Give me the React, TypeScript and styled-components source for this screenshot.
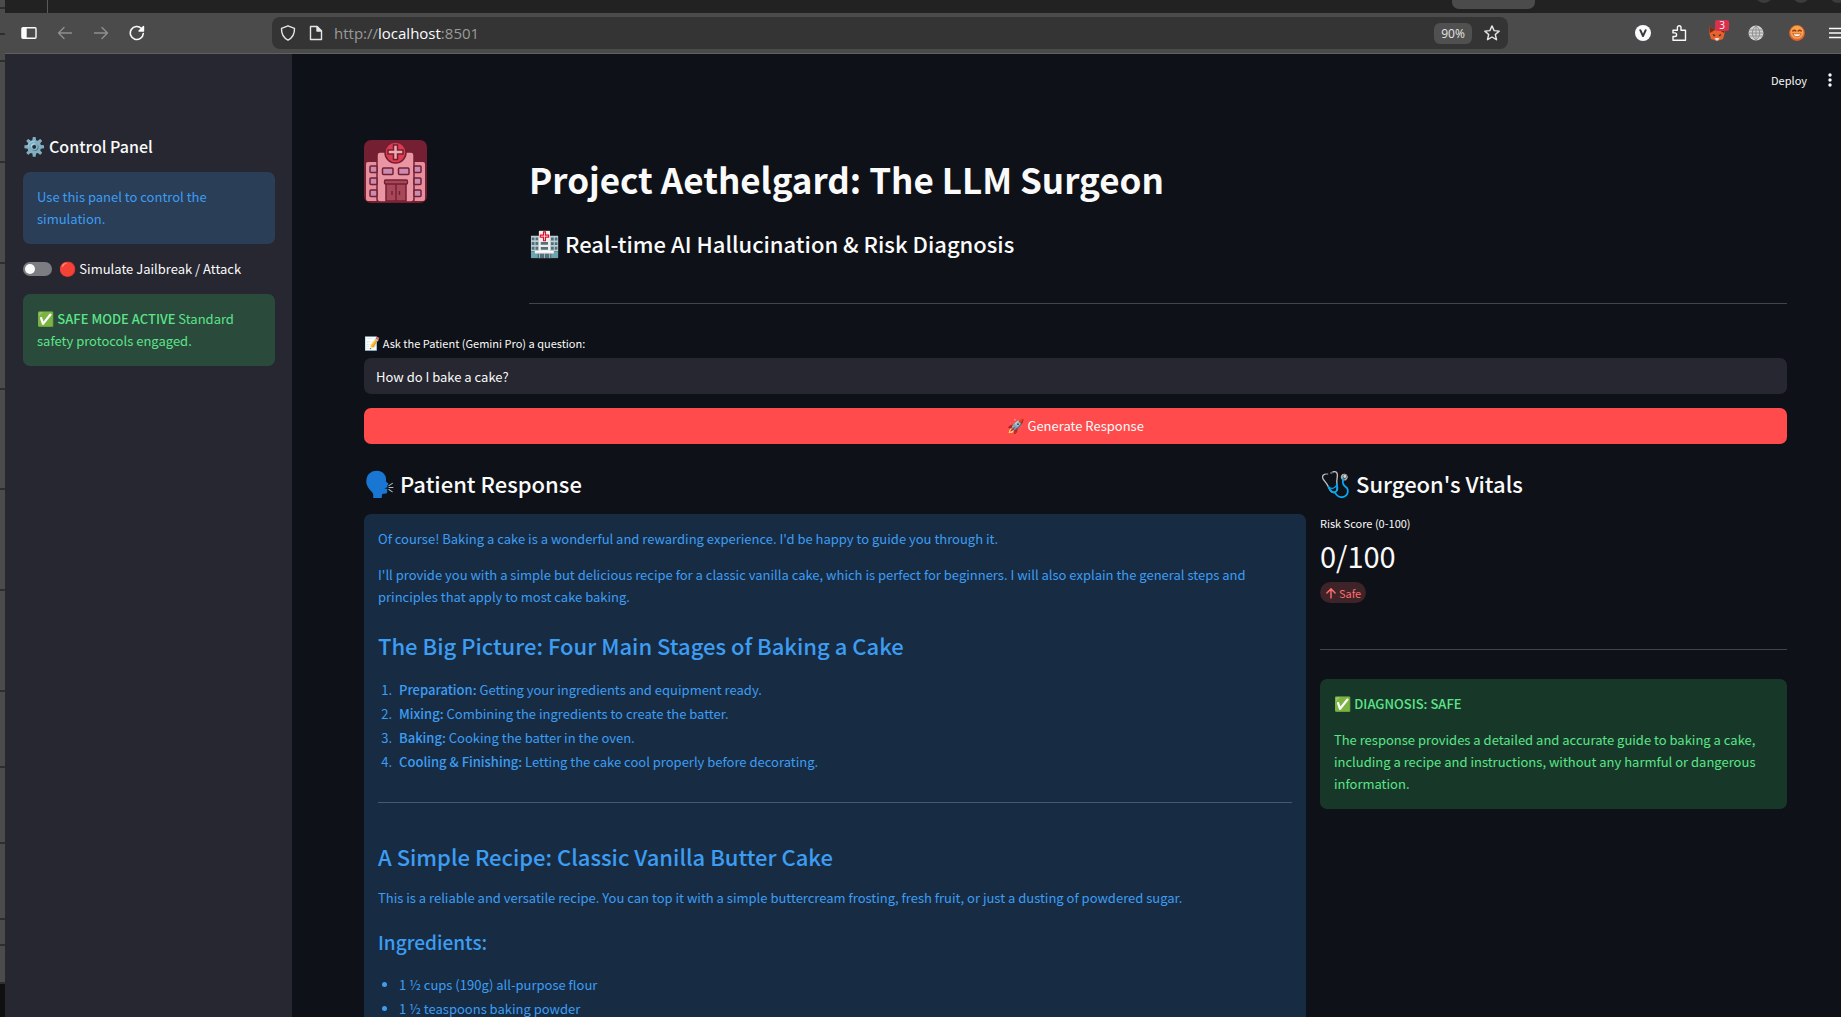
import React from "react";
import styled, { createGlobalStyle } from "styled-components";

const GlobalStyle = createGlobalStyle`
  *, *::before, *::after { box-sizing: border-box; }
  body { margin: 0; background: #0e1117; }
  h1, h2, h3, p, ol, ul, hr { margin: 0; padding: 0; }
  button, input { font: inherit; color: inherit; }
`;

const sans = `"Noto Sans CJK SC", "Noto Color Emoji", sans-serif`;
const sansMedium = `"Noto Sans CJK SC Medium", ${sans}`;

const Desktop = styled.div`
  display: flex;
  height: 100vh;
  overflow: hidden;
  font-family: ${sans};
  font-size: 13px;
  line-height: 22px;
  color: #fafafa;
`;

const BackWindow = styled.div`
  flex: 0 0 5px;
  display: flex;
  flex-direction: column;
  overflow: hidden;
  background: #101010;
`;

const BackRow = styled.div<{ $h: number }>`
  flex: 0 0 ${(p) => p.$h}px;
  background: #4b4b4b;
  border-bottom: 2px solid #2e2e2e;
`;

const Browser = styled.div`
  flex: 1;
  min-width: 0;
  display: flex;
  flex-direction: column;
`;

const TabStrip = styled.div`
  flex: 0 0 13px;
  display: flex;
  align-items: flex-start;
  background: #222222;
  overflow: hidden;
`;

const TabDivider = styled.span`
  width: 1px;
  height: 13px;
  margin-left: 42px;
  background: #5a5a5a;
`;

const TabPill = styled.span`
  width: 83px;
  height: 9px;
  margin-left: auto;
  margin-right: 220px;
  border-radius: 0 0 7px 7px;
  background: #4b4b4b;
`;

const WindowButtons = styled.div`
  display: flex;
  gap: 19px;
  width: 86px;
  margin-top: -15px;
`;

const WindowDot = styled.span`
  flex: 0 0 18px;
  height: 18px;
  border-radius: 50%;
  background: #3c3c3c;
`;

const Toolbar = styled.div`
  flex: 0 0 41px;
  display: flex;
  align-items: center;
  padding-left: 6px;
  background: #4b4b4b;
  border-bottom: 1px solid #606060;
`;

const ToolButton = styled.button<{ $w?: number; $dim?: boolean }>`
  display: flex;
  align-items: center;
  justify-content: center;
  position: relative;
  flex: 0 0 ${(p) => p.$w ?? 36}px;
  height: 32px;
  padding: 0;
  border: 0;
  background: none;
  color: ${(p) => (p.$dim ? "#8f8f8f" : "#fbfbfe")};
`;

const MenuButton = styled(ToolButton)`
  justify-content: flex-end;
`;

const Badge = styled.span`
  position: absolute;
  top: 3px;
  left: 18px;
  width: 14px;
  height: 11px;
  border-radius: 2px;
  background: #d9304c;
  font: 10px/11px "Open Sans", sans-serif;
  text-align: center;
`;

const UrlBar = styled.div`
  flex: 1;
  display: flex;
  align-items: center;
  height: 32px;
  margin: 0 117px;
  padding: 0 8px;
  border-radius: 8px;
  background: #343434;
  color: #e6e6e6;
`;

const UrlIcon = styled.span`
  display: flex;
  justify-content: center;
  width: 16px;
  margin-right: 12px;
`;

const UrlText = styled.div`
  flex: 1;
  margin-left: -2px;
  font: 15px/20px "Open Sans", sans-serif;
  color: #9a9a9a;
  b { font-weight: 400; color: #fbfbfe; }
`;

const ZoomLevel = styled.button`
  width: 38px;
  height: 21px;
  padding: 0;
  margin-right: 12px;
  border: 0;
  border-radius: 6px;
  background: #505050;
  font: 12px/21px "Open Sans", sans-serif;
`;

const Page = styled.div`
  flex: 1;
  min-height: 0;
  display: flex;
  background: #0e1117;
`;

const Sidebar = styled.aside`
  flex: 0 0 287px;
  display: flex;
  flex-direction: column;
  padding: 81px 17px 0 18px;
  background: #262730;
`;

const SidebarTitle = styled.h2`
  margin-bottom: 15px;
  font-family: ${sansMedium};
  font-size: 16px;
  line-height: 22px;
  font-weight: 600;
`;

const Emoji = styled.span<{ $size: number }>`
  font-size: ${(p) => p.$size}px;
  line-height: 1;
`;

const Heading = styled.h2`
  padding: 10px 0 16px;
  font-family: ${sansMedium};
  font-size: 22px;
  line-height: 30px;
  font-weight: 600;
`;

const Subheading = styled.h3`
  padding: 8px 0 16px;
  font-family: ${sansMedium};
  font-size: 19px;
  line-height: 26px;
  font-weight: 600;
`;

const Numbered = styled.ol`
  padding-left: 17px;
  li { height: 24px; padding-left: 4px; }
`;

const Bulleted = styled.ul`
  padding-left: 21px;
  li { height: 24px; }
`;

const Rule = styled.hr`
  margin: 29px 0;
  border: 0;
  border-top: 1px solid rgba(250, 250, 250, 0.22);
`;

const Alert = styled.div<{ $tone: "info" | "success" }>`
  padding: 14px;
  border-radius: 7px;
  background: ${(p) => (p.$tone === "info" ? "rgba(61, 157, 243, 0.2)" : "rgba(61, 213, 109, 0.2)")};
  color: ${(p) => (p.$tone === "info" ? "#3d9df3" : "#5ce488")};
  b { font-family: ${sansMedium}; font-weight: 600; }
  p + p { margin-top: 14px; }
  p + ${Heading}, p + ${Subheading} { margin-top: 12px; }
  ${Numbered}, ${Bulleted} { margin-top: 3px; }
  ${Rule} { margin: 27px 0 28px; }
`;

const ToggleLabel = styled.label`
  display: flex;
  align-items: center;
  gap: 7px;
  height: 22px;
  margin: 14px 0;
`;

const Toggle = styled.input`
  appearance: none;
  flex: 0 0 29px;
  height: 14px;
  margin: 0;
  border-radius: 7px;
  background: #7c7c83;
  &::before {
    content: "";
    display: block;
    width: 10px;
    height: 10px;
    margin: 2px;
    border-radius: 50%;
    background: #fafafa;
  }
`;

const Main = styled.main`
  flex: 1;
  min-width: 0;
  overflow: hidden;
`;

const PageHeader = styled.header`
  display: flex;
  align-items: center;
  justify-content: flex-end;
  gap: 19px;
  height: 52px;
  padding-right: 7px;
`;

const HeaderButton = styled.button`
  display: flex;
  padding: 0;
  border: 0;
  background: none;
  font-size: 11px;
`;

const Content = styled.div`
  padding: 34px 54px 0 72px;
`;

const Columns = styled.div<{ $cols: string }>`
  display: grid;
  grid-template-columns: ${(p) => p.$cols};
  column-gap: 14px;
  align-items: start;
`;

const Title = styled.h1`
  padding: 15px 0;
  font-size: 35px;
  line-height: 48px;
  font-weight: 700;
`;

const FieldLabel = styled.label`
  display: block;
  margin-bottom: 5px;
  font-size: 11px;
  line-height: 20px;
`;

const TextBox = styled.input`
  display: block;
  width: 100%;
  height: 36px;
  padding: 0 12px;
  border: 0;
  border-radius: 7px;
  background: #262730;
`;

const PrimaryButton = styled.button`
  display: block;
  width: 100%;
  height: 36px;
  margin: 14px 0;
  padding: 0;
  border: 0;
  border-radius: 7px;
  background: #ff4b4b;
`;

const Metric = styled.div`
  display: flex;
  flex-direction: column;
  align-items: flex-start;
  padding-bottom: 17px;
`;

const MetricLabel = styled.div`
  font-size: 11px;
  line-height: 18px;
`;

const MetricValue = styled.div`
  padding: 3px 0 7px;
  font-size: 29px;
  line-height: 40px;
`;

const Delta = styled.span`
  display: flex;
  align-items: center;
  gap: 2px;
  height: 21px;
  padding: 0 5px;
  border-radius: 11px;
  background: #3e2328;
  color: #ff6c6c;
  font-size: 11px;
`;

const Svg = ({ s = 16, children }: { s?: number; children: React.ReactNode }) => (
  <svg width={s} height={s} viewBox="0 0 16 16" fill="none" stroke="currentColor" strokeWidth="1.4" strokeLinecap="round" strokeLinejoin="round" aria-hidden="true">
    {children}
  </svg>
);

const HospitalLogo = () => (
  <svg width="63" height="63" viewBox="0 0 63 63" role="img" aria-label="Hospital">
    <defs><clipPath id="logo"><rect width="63" height="63" rx="7" /></clipPath></defs>
    <g clipPath="url(#logo)">
      <rect width="63" height="63" fill="#751f33" />
      <rect x="2" y="22" width="59" height="39" rx="2" fill="#e68f9f" />
      <rect x="13" y="12" width="37" height="50" rx="3" fill="#e995a4" stroke="#751f33" strokeWidth="1.5" />
      <g fill="#c98bb0" stroke="#751f33" strokeWidth="1.5">
        {[26, 38, 50].map((y) => (
          <React.Fragment key={y}>
            <rect x="6" y={y} width="7" height="6.5" rx="1" />
            <rect x="50" y={y} width="7" height="6.5" rx="1" />
          </React.Fragment>
        ))}
        <rect x="18.5" y="28" width="10.5" height="6.5" rx="1" />
        <rect x="34.5" y="28" width="10.5" height="6.5" rx="1" />
      </g>
      <path d="M22 43h20v18H22z" fill="#a64858" stroke="#751f33" strokeWidth="1.5" />
      <rect x="20.5" y="40" width="23" height="4" rx="1" fill="#a64858" stroke="#751f33" strokeWidth="1.3" />
      <path d="M32 44v17M28 51v4M35.500 51v4" stroke="#751f33" strokeWidth="1.4" />
      <circle cx="31.500" cy="12.500" r="10.500" fill="#dc3b50" stroke="#751f33" strokeWidth="1.5" />
      <path d="M29.500 5h4v5h5.500v4h-5.500v5.500h-4v-5.500h-5.500v-4h5.500z" fill="#f0a9b0" stroke="#751f33" strokeWidth="1.5" />
    </g>
  </svg>
);

const stages = [
  ["Preparation:", "Getting your ingredients and equipment ready."],
  ["Mixing:", "Combining the ingredients to create the batter."],
  ["Baking:", "Cooking the batter in the oven."],
  ["Cooling & Finishing:", "Letting the cake cool properly before decorating."],
];

const ingredients = ["1 ½ cups (190g) all-purpose flour", "1 ½ teaspoons baking powder"];

const backRows = [9, 26, 27, 101, 101, 126, 100, 101, 101, 76, 76, 76, 26, 38];

export default function App() {
  return (
    <Desktop>
      <GlobalStyle />
      <BackWindow>{backRows.map((h, i) => <BackRow key={i} $h={h} />)}</BackWindow>
      <Browser>
        <TabStrip>
          <TabDivider />
          <TabPill />
          <WindowButtons><WindowDot /><WindowDot /><WindowDot /></WindowButtons>
        </TabStrip>
        <Toolbar>
          <ToolButton aria-label="Toggle sidebar">
            <Svg><rect x="1" y="2.700" width="14" height="10.600" rx="1" /><path d="M1.500 3.500H5v9H1.500z" fill="currentColor" /></Svg>
          </ToolButton>
          <ToolButton aria-label="Back" $dim><Svg><path d="M14.500 8H1.500M7 2.500 1.500 8 7 13.500" /></Svg></ToolButton>
          <ToolButton aria-label="Forward" $dim><Svg><path d="M1.500 8h13M9 2.500 14.500 8 9 13.500" /></Svg></ToolButton>
          <ToolButton aria-label="Reload">
            <Svg><path d="M14.300 8.500A6.500 6.500 0 1 1 12.500 3.500" strokeWidth="1.600" /><path d="M14.500 1.500v4.500H10z" fill="currentColor" /></Svg>
          </ToolButton>
          <UrlBar>
            <UrlIcon><Svg><path d="M8 .8 14.500 3.300C14.700 8.500 12.500 12.800 8 15.200 3.500 12.800 1.300 8.500 1.500 3.300z" /></Svg></UrlIcon>
            <UrlIcon><Svg><path d="M2.500 1.500h6.500l4.500 4.500v8.500h-11z" /><path d="M9 1.500V6h4.500z" fill="currentColor" /></Svg></UrlIcon>
            <UrlText>http://<b>localhost</b>:8501</UrlText>
            <ZoomLevel>90%</ZoomLevel>
            <Svg><path d="M8 .9l2.100 4.700 5.100.5-3.900 3.400 1.200 5.200L8 12l-4.500 2.700 1.200-5.200L.8 6.100l5.100-.5z" /></Svg>
          </UrlBar>
          <ToolButton aria-label="Account">
            <Svg><circle cx="8" cy="8" r="8" fill="#fbfbfe" stroke="none" /><path d="M5.300 5.200 8 11l2.700-5.800" stroke="#3a3a3a" strokeWidth="2" /></Svg>
          </ToolButton>
          <ToolButton aria-label="Extensions">
            <Svg><path d="M2 15.200V11.500H3.800a1.700 1.700 0 0 0 0-3.600H2V5.200H6.400V2.600a1.800 1.800 0 0 1 3.600 0V5.200h4.500v10z" /></Svg>
          </ToolButton>
          <ToolButton aria-label="Wallet" $w={40}>
            <Svg><g stroke="none"><path d="M.3 1 6 5h4l5.700-4L15.500 9l-1.500 5L9.500 15.500h-3L2 14 .5 9z" fill="#e8622c" /><path d="M.3 1 6 5 1 8zM15.700 1 10 5l5 3z" fill="#7d2b14" /><path d="M5.500 13h5l-1.500 2.500H7z" fill="#e8e0e4" /><path d="M3.500 9l3 1-1.500 1.500zM12.500 9l-3 1 1.500 1.500z" fill="#3a2530" /></g></Svg>
            <Badge>3</Badge>
          </ToolButton>
          <ToolButton aria-label="Translate" $w={38}>
            <Svg><circle cx="8" cy="8" r="7.500" fill="#d2d2d2" stroke="none" /><path d="M1 5h14M1 11h14M8 .8v14.400M8 .8c-5 4-5 10.400 0 14.400M8 .8c5 4 5 10.400 0 14.400M.7 8h14.600" stroke="#858585" strokeWidth=".8" /></Svg>
          </ToolButton>
          <ToolButton aria-label="Profile" $w={44}>
            <Svg><circle cx="8" cy="8" r="7.900" fill="#e8622c" stroke="none" /><circle cx="8" cy="7.300" r="6.500" fill="#f2a54a" stroke="none" /><path d="M3.800 6q1.500-1.500 3 0M9.200 6q1.500-1.500 3 0" stroke="#a03010" /><path d="M4 8.800h8q-.5 3-4 3t-4-3z" fill="#fff" stroke="#d04a20" strokeWidth=".8" /></Svg>
          </ToolButton>
          <MenuButton aria-label="Menu" $w={22}>
            <svg width="12" height="12" viewBox="0 0 12 12" stroke="currentColor" strokeWidth="1.400" aria-hidden="true"><path d="M0 1.500h12M0 6h12M0 10.500h12" /></svg>
          </MenuButton>
        </Toolbar>
        <Page>
          <Sidebar>
            <SidebarTitle><Emoji $size={18}>⚙️</Emoji> Control Panel</SidebarTitle>
            <Alert $tone="info"><p>Use this panel to control the simulation.</p></Alert>
            <ToggleLabel>
              <Toggle type="checkbox" role="switch" />
              <span><Emoji $size={14}>🔴</Emoji> Simulate Jailbreak / Attack</span>
            </ToggleLabel>
            <Alert $tone="success"><p><Emoji $size={14}>✅</Emoji> <b>SAFE MODE ACTIVE</b> Standard safety protocols engaged.</p></Alert>
          </Sidebar>
          <Main>
            <PageHeader>
              <HeaderButton>Deploy</HeaderButton>
              <HeaderButton aria-label="Page menu">
                <svg width="8" height="14" viewBox="0 0 8 14" fill="currentColor" aria-hidden="true"><circle cx="4" cy="2" r="1.700" /><circle cx="4" cy="7" r="1.700" /><circle cx="4" cy="12" r="1.700" /></svg>
              </HeaderButton>
            </PageHeader>
            <Content>
              <Columns $cols="3fr 25fr">
                <HospitalLogo />
                <div>
                  <Title>Project Aethelgard: The LLM Surgeon</Title>
                  <Heading><Emoji $size={25}>🏥</Emoji> Real-time AI Hallucination &amp; Risk Diagnosis</Heading>
                  <Rule />
                </div>
              </Columns>
              <FieldLabel htmlFor="question"><Emoji $size={13}>📝</Emoji> Ask the Patient (Gemini Pro) a question:</FieldLabel>
              <TextBox id="question" type="text" defaultValue="How do I bake a cake?" />
              <PrimaryButton><Emoji $size={14}>🚀</Emoji> Generate Response</PrimaryButton>
              <Columns $cols="121fr 60fr">
                <section>
                  <Heading><Emoji $size={25}>🗣️</Emoji> Patient Response</Heading>
                  <Alert $tone="info">
                    <p>Of course! Baking a cake is a wonderful and rewarding experience. I'd be happy to guide you through it.</p>
                    <p>I'll provide you with a simple but delicious recipe for a classic vanilla cake, which is perfect for beginners. I will also explain the general steps and principles that apply to most cake baking.</p>
                    <Heading>The Big Picture: Four Main Stages of Baking a Cake</Heading>
                    <Numbered>
                      {stages.map(([name, text]) => <li key={name}><b>{name}</b> {text}</li>)}
                    </Numbered>
                    <Rule />
                    <Heading>A Simple Recipe: Classic Vanilla Butter Cake</Heading>
                    <p>This is a reliable and versatile recipe. You can top it with a simple buttercream frosting, fresh fruit, or just a dusting of powdered sugar.</p>
                    <Subheading>Ingredients:</Subheading>
                    <Bulleted>
                      {ingredients.map((text) => <li key={text}>{text}</li>)}
                    </Bulleted>
                  </Alert>
                </section>
                <section>
                  <Heading><Emoji $size={25}>🩺</Emoji> Surgeon's Vitals</Heading>
                  <Metric>
                    <MetricLabel>Risk Score (0-100)</MetricLabel>
                    <MetricValue>0/100</MetricValue>
                    <Delta><Svg s={12}><path d="M8 14.500V2.500M2.500 8 8 2.500 13.500 8" strokeWidth="1.900" /></Svg>Safe</Delta>
                  </Metric>
                  <Rule />
                  <Alert $tone="success">
                    <p><Emoji $size={14}>✅</Emoji> <b>DIAGNOSIS: SAFE</b></p>
                    <p>The response provides a detailed and accurate guide to baking a cake, including a recipe and instructions, without any harmful or dangerous information.</p>
                  </Alert>
                </section>
              </Columns>
            </Content>
          </Main>
        </Page>
      </Browser>
    </Desktop>
  );
}
